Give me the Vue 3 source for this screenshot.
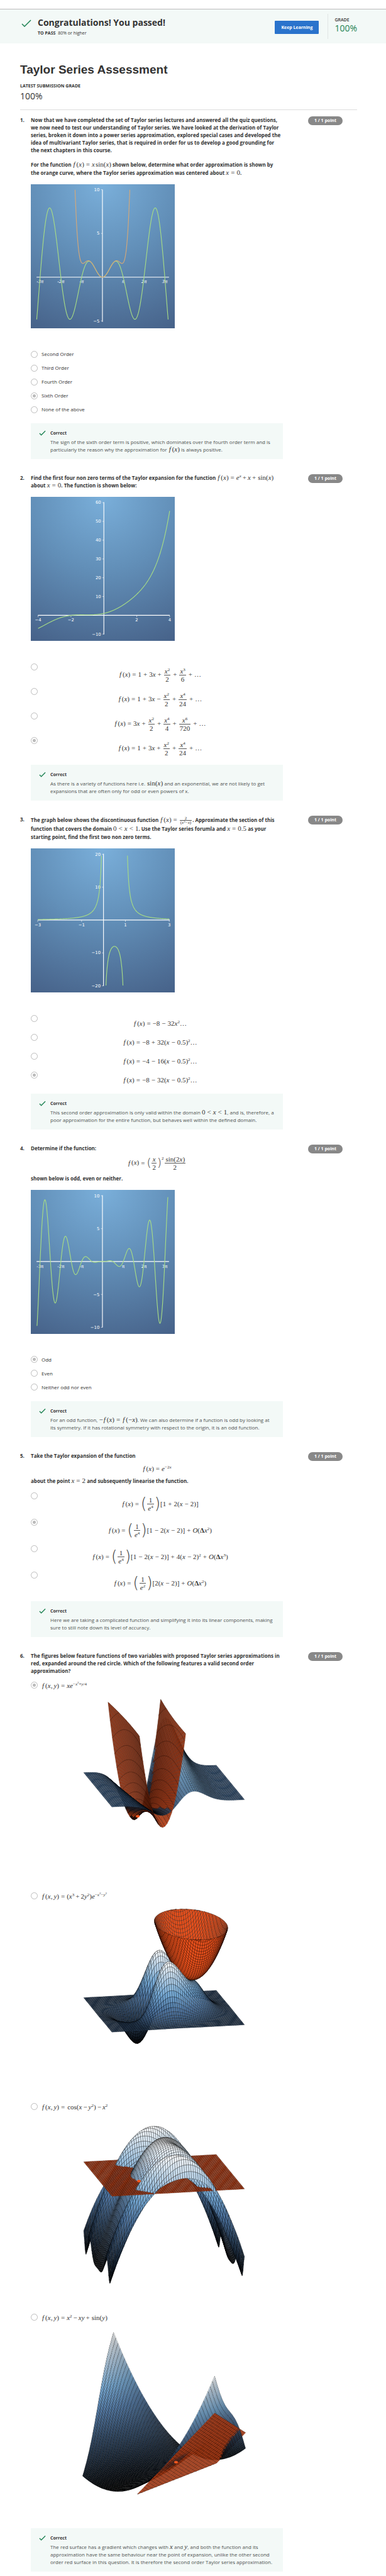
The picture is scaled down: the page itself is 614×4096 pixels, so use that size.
<script setup>
import { h } from 'vue'

/* ---------- formulas ---------- */

function readGroup(src, at) {
  if (src[at] !== '{') return [src[at], at + 1]
  let depth = 1
  let end = at + 1
  while (depth > 0) {
    if (src[end] === '{') depth++
    if (src[end] === '}') depth--
    end++
  }
  return [src.slice(at + 1, end - 1), end]
}

function formula(src, tight = false) {
  const out = []
  let canBeBinary = false
  let i = 0
  while (i < src.length) {
    const c = src[i]
    if (c === ' ') {
      i++
    } else if (src.startsWith('\\frac', i)) {
      const [top, a] = readGroup(src, i + 5)
      const [bottom, b] = readGroup(src, a)
      out.push(h('span', { class: 'm-frac' }, [
        h('span', { class: 'm-num' }, formula(top, true)),
        h('span', { class: 'm-den' }, formula(bottom, true)),
      ]))
      canBeBinary = true
      i = b
    } else if (src.startsWith('\\big', i)) {
      out.push(h('span', { class: 'm-big' }, src[i + 4]))
      i += 5
    } else if (src.startsWith('\\mid', i)) {
      out.push(h('span', { class: 'm-mid' }, src[i + 4]))
      i += 5
    } else if (src.startsWith('\\sin', i) || src.startsWith('\\cos', i)) {
      out.push(h('span', { class: 'm-fn' }, src.slice(i + 1, i + 4)))
      canBeBinary = true
      i += 4
    } else if (c === '^') {
      const [body, a] = readGroup(src, i + 1)
      out.push(h('span', { class: 'm-sup' }, formula(body, true)))
      i = a
    } else if (c === '=' || c === '<') {
      out.push(h('span', { class: 'm-rel' }, c))
      canBeBinary = false
      i++
    } else if (c === '+' || c === '-') {
      const sign = c === '-' ? '−' : '+'
      out.push(h('span', { class: canBeBinary && !tight ? 'm-bin' : 'm-op' }, sign))
      canBeBinary = false
      i++
    } else if (c === 'f') {
      out.push(h('i', { class: 'm-f' }, c))
      i++
    } else if (/[a-zA-Z]/.test(c)) {
      out.push(h('i', null, c))
      canBeBinary = true
      i++
    } else if (c === 'Δ') {
      out.push(h('b', null, c))
      i++
    } else {
      out.push(c)
      canBeBinary = c !== '(' && c !== '['
      if (c === ',') out.push(h('span', { class: 'm-gap' }))
      i++
    }
  }
  return out
}

const Tex = (props) => h('span', { class: 'math' }, formula(props.src))
Tex.props = ['src']

const Rich = (props) =>
  props.text.split('$').map((part, i) =>
    i % 2 ? h('span', { class: 'math' }, formula(part)) : part)
Rich.props = ['text']

/* ---------- line plots ---------- */

const green = '#a6db86'
const orange = '#d5a878'

function trace(plot, fn) {
  let d = ''
  let pen = false
  const steps = 900
  for (let i = 0; i <= steps; i++) {
    const x = plot.from + ((plot.to - plot.from) * i) / steps
    const y = fn(x)
    if (y > plot.max || y < plot.min || !Number.isFinite(y)) {
      pen = false
      continue
    }
    d += (pen ? 'L' : 'M') + (plot.ox + x * plot.sx).toFixed(1) + ' ' + (plot.oy - y * plot.sy).toFixed(1)
    pen = true
  }
  return d
}

const PI = Math.PI
const piTicks = [[-3, '-3π'], [-2, '-2π'], [-1, '-π'], [1, 'π'], [2, '2π'], [3, '3π']].map(([k, t]) => [k * PI, t])
const num = (...vals) => vals.map((v) => [v, String(v).replace('-', '−')])

function makePlot(p) {
  return { ...p, paths: p.curves.map(([fn, color]) => ({ d: trace(p, fn), color })) }
}

const plotSine = makePlot({
  title: 'Graph of x sin(x) with an approximation', ox: 199, oy: 258, sx: 18.38, sy: 24.3, from: -10, to: 10, min: -5, max: 10,
  left: 16, right: 384, xt: piTicks, yt: num(10, 5, -5), italic: true,
  curves: [[(x) => x * Math.sin(x), green], [(x) => x ** 2 - x ** 4 / 6 + x ** 6 / 120, orange]],
})
const plotExp = makePlot({
  title: 'Graph of the function', ox: 203, oy: 329, sx: 45.7, sy: 5.216, from: -4, to: 4, min: -10, max: 60,
  left: 20, right: 386, xt: num(-4, -2, 2, 4), yt: num(60, 50, 40, 30, 20, 10, -10), ticks: true,
  curves: [[(x) => Math.exp(x) + x + x * Math.sin(x), green]],
})
const plotRational = makePlot({
  title: 'Graph of the discontinuous function', ox: 202, oy: 199, sx: 60.9, sy: 9.13, from: -3, to: 3, min: -20, max: 20,
  left: 20, right: 386, xt: num(-3, -1, 1, 3), yt: num(20, 10, -10, -20), ticks: true,
  curves: [[(x) => 2 / (x * x - x), green]],
})
const plotOdd = makePlot({
  title: 'Graph of the product function', ox: 199, oy: 199, sx: 18.38, sy: 18.27, from: -10, to: 10, min: -10, max: 10,
  left: 16, right: 384, xt: piTicks, yt: num(10, 5, -5, -10),
  curves: [[(x) => (x / 2) ** 2 * Math.sin(2 * x) / 2, green]],
})

/* ---------- surface plots ---------- */

const ramp = [[0, [0, 0, 0]], [0.33, [48, 72, 100]], [0.5, [80, 119, 163]], [0.66, [119, 172, 216]], [1, [255, 255, 255]]]

function shade(t) {
  const v = Math.min(1, Math.max(0, t))
  let k = 1
  while (ramp[k][0] < v) k++
  const [a, ca] = ramp[k - 1]
  const [b, cb] = ramp[k]
  const u = (v - a) / (b - a)
  return 'rgb(' + ca.map((c, i) => Math.round(c + (cb[i] - c) * u)).join() + ')'
}

const clamp = (v, lo, hi) => Math.min(hi, Math.max(lo, v))

function surface(view, { fn, lo = () => -3, hi = () => 3, y0 = -3, y1 = 3, color }) {
  const n = 60
  const quads = []
  const point = (i, j) => {
    const y = clamp(-3 + (6 * j) / n, y0, y1)
    const x = clamp(-3 + (6 * i) / n, lo(y), hi(y))
    const z = fn(x, y)
    const lift = (z - view.base) * view.z
    return {
      z,
      sx: view.cx + view.ex[0] * x + view.ey[0] * y,
      sy: view.cy + view.ex[1] * x + view.ey[1] * y - lift,
      depth: 33.9 * (view.near[0] * x + view.near[1] * y) + 0.269 * lift,
    }
  }
  const rows = []
  for (let j = 0; j <= n; j++) {
    const row = []
    for (let i = 0; i <= n; i++) row.push(point(i, j))
    rows.push(row)
  }
  for (let j = 0; j < n; j++) {
    for (let i = 0; i < n; i++) {
      const q = [rows[j][i], rows[j][i + 1], rows[j + 1][i + 1], rows[j + 1][i]]
      const wide = Math.abs(q[1].sx - q[0].sx) + Math.abs(q[2].sx - q[3].sx)
      if (wide < 0.01 || (q[0].sy === q[3].sy && q[0].sx === q[3].sx)) continue
      const z = (q[0].z + q[1].z + q[2].z + q[3].z) / 4
      quads.push({
        depth: (q[0].depth + q[1].depth + q[2].depth + q[3].depth) / 4,
        points: q.map((p) => p.sx.toFixed(1) + ',' + p.sy.toFixed(1)).join(' '),
        fill: color || shade((z - view.zmin) / (view.zmax - view.zmin)),
      })
    }
  }
  return quads
}

function figure(view, parts) {
  const quads = parts.flatMap((p) => surface(view, p)).sort((a, b) => a.depth - b.depth)
  return { quads, dot: view.dot, title: view.title }
}

const red = '#e8501c'
const left = { cx: 195, ex: [35.15, -1.93], ey: [-7.5, -9.13], near: [-0.209, -0.978], base: 0 }
const right = { cx: 195, ex: [35, 2.13], ey: [8.19, -9], near: [0.228, -0.974], base: 0 }

const E = Math.exp(0.575)
const trough = (y) => -0.4289 * E * (1 + (y - 2.3) / 4 + (y - 2.3) ** 2 / 32)
const span = (y) => Math.sqrt((1.25 - trough(y)) / (0.858 * E))
const bowl = (x, y) => 0.41 + 0.298 * (x - 1.22) ** 2 + 0.102 * y * y
const bowlSpan = (y) => Math.sqrt(Math.max(0, (0.725 - 0.102 * y * y) / 0.298))

const figures = [
  figure({ ...left, cy: 149, z: 87.9, zmin: -0.91, zmax: 0.91, dot: [153, 197], title: 'Surface with red troughs' }, [
    { fn: (x, y) => x * Math.exp(-x * x + y / 4) },
    { fn: (x, y) => trough(y) + 0.858 * E * (x + 0.707) ** 2, lo: (y) => -0.707 - span(y), hi: (y) => -0.707 + span(y), color: red },
  ]),
  figure({ ...left, cy: 172, z: 119.6, zmin: -0.41, zmax: 0.74, title: 'Surface with red bowl' }, [
    { fn: (x, y) => (x ** 3 + 2 * y * y) * Math.exp(-x * x - y * y) },
    { fn: bowl, lo: (y) => 1.22 - bowlSpan(y), hi: (y) => 1.22 + bowlSpan(y), y0: -2.66, y1: 2.66, color: red },
  ]),
  figure({ ...left, cy: 98, z: 18, base: -2.06, zmin: -10, zmax: 1, dot: [155, 107], title: 'Arched surface with red plane' }, [
    { fn: (x, y) => Math.cos(x - y * y) - x * x },
    { fn: () => -2.06, color: red },
  ]),
  figure({ ...right, cy: 219, z: 9.53, zmin: -2.4, zmax: 18, dot: [214, 219], title: 'Saddle surface with red plane' }, [
    { fn: (x, y) => x * x - x * y + Math.sin(y) },
    { fn: (x, y) => 2.05 + 4.08 * (x - 1) - 1.49 * (y + 2), lo: (y) => 1 + (-4.68 + 1.49 * (y + 2)) / 4.08, color: red },
  ]),
]

/* ---------- content ---------- */

const questions = [
  {
    intro: [
      { text: 'Now that we have completed the set of Taylor series lectures and answered all the quiz questions,\nwe now need to test our understanding of Taylor series. We have looked at the derivation of Taylor\nseries, broken it down into a power series approximation, explored special cases and developed the\nidea of multivariant Taylor series, that is required in order for us to develop a good grounding for\nthe next chapters in this course.' },
      { text: 'For the function $f(x) = x\\sin(x)$ shown below, determine what order approximation is shown by\nthe orange curve, where the Taylor series approximation was centered about $x = 0$.', kind: 'second' },
    ],
    plot: plotSine,
    options: ['Second Order', 'Third Order', 'Fourth Order', 'Sixth Order', 'None of the above'],
    picked: 3,
    feedback: 'The sign of the sixth order term is positive, which dominates over the fourth order term and is\nparticularly the reason why the approximation for $f(x)$ is always positive.',
  },
  {
    intro: [{ text: 'Find the first four non zero terms of the Taylor expansion for the function $f(x) = e^x + x + \\sin(x)$\nabout $x = 0$. The function is shown below:' }],
    plot: plotExp,
    kind: 'tall',
    equations: [
      'f(x) = 1 + 3x + \\frac{x^2}{2} + \\frac{x^3}{6} + …',
      'f(x) = 1 + 3x - \\frac{x^2}{2} + \\frac{x^4}{24} + …',
      'f(x) = 3x + \\frac{x^2}{2} + \\frac{x^4}{4} + \\frac{x^6}{720} + …',
      'f(x) = 1 + 3x + \\frac{x^2}{2} + \\frac{x^4}{24} + …',
    ],
    picked: 3,
    feedback: 'As there is a variety of functions here i.e. $\\sin(x)$ and an exponential, we are not likely to get\nexpansions that are often only for odd or even powers of x.',
  },
  {
    intro: [{ text: 'The graph below shows the discontinuous function $f(x) = \\frac{2}{(x^2-x)}$. Approximate the section of this\nfunction that covers the domain $0 < x < 1$. Use the Taylor series forumla and $x = 0.5$ as your\nstarting point, find the first two non zero terms.', kind: 'small-fraction' }],
    plot: plotRational,
    kind: 'plain',
    equations: [
      'f(x) = -8 - 32x^2…',
      'f(x) = -8 + 32(x - 0.5)^2…',
      'f(x) = -4 - 16(x - 0.5)^2…',
      'f(x) = -8 - 32(x - 0.5)^2…',
    ],
    picked: 3,
    feedback: 'This second order approximation is only valid within the domain $0 < x < 1$, and is, therefore, a\npoor approximation for the entire function, but behaves well within the defined domain.',
  },
  {
    intro: [
      { text: 'Determine if the function:' },
      { tex: 'f(x) = \\mid(\\frac{x}{2}\\mid)^{2}\\frac{\\sin(2x)}{2}', kind: 'fraction' },
      { text: 'shown below is odd, even or neither.' },
    ],
    plot: plotOdd,
    options: ['Odd', 'Even', 'Neither odd nor even'],
    picked: 0,
    feedback: 'For an odd function, $-f(x) = f(-x)$. We can also determine if a function is odd by looking at\nits symmetry. If it has rotational symmetry with respect to the origin, it is an odd function.',
  },
  {
    intro: [
      { text: 'Take the Taylor expansion of the function' },
      { tex: 'f(x) = e^{-2x}', kind: 'line' },
      { text: 'about the point $x = 2$ and subsequently linearise the function.' },
    ],
    kind: 'taller',
    equations: [
      'f(x) = \\big(\\frac{1}{e^4}\\big)[1 + 2(x - 2)]',
      'f(x) = \\big(\\frac{1}{e^4}\\big)[1 - 2(x - 2)] + O(Δx^2)',
      'f(x) = \\big(\\frac{1}{e^4}\\big)[1 - 2(x - 2)] + 4(x - 2)^2 + O(Δx^3)',
      'f(x) = \\big(\\frac{1}{e^2}\\big)[2(x - 2)] + O(Δx^2)',
    ],
    picked: 1,
    feedback: 'Here we are taking a complicated function and simplifying it into its linear components, making\nsure to still note down its level of accuracy.',
  },
  {
    intro: [{ text: 'The figures below feature functions of two variables with proposed Taylor series approximations in\nred, expanded around the red circle. Which of the following features a valid second order\napproximation?' }],
    figures: [
      'f(x,y) = xe^{-x^2+y/4}',
      'f(x,y) = (x^3 + 2y^2)e^{-x^2-y^2}',
      'f(x,y) = \\cos(x - y^2) - x^2',
      'f(x,y) = x^2 - xy + \\sin(y)',
    ],
    picked: 0,
    feedback: 'The red surface has a gradient which changes with $x$ and $y$, and both the function and its\napproximation have the same behaviour near the point of expansion, unlike the other second\norder red surface in this question. It is therefore the second order Taylor series approximation.',
  },
]
</script>

<template>
  <div class="page">
    <header class="banner">
      <svg class="banner-check" viewBox="0 0 16 12" aria-hidden="true"><path d="M1 7 L5 11 L15 1" /></svg>
      <div class="banner-text">
        <h2>Congratulations! You passed!</h2>
        <p><b>TO PASS</b> 80% or higher</p>
      </div>
      <button type="button" class="keep">Keep Learning</button>
      <div class="grade">
        <span>GRADE</span>
        <strong>100%</strong>
      </div>
    </header>

    <main>
      <div class="summary">
        <h1>Taylor Series Assessment</h1>
        <p class="caption">LATEST SUBMISSION GRADE</p>
        <p class="score">100%</p>
      </div>

      <section v-for="(q, qi) in questions" :key="qi" class="question">
        <span class="number">{{ qi + 1 }}.</span>
        <div class="body">
          <template v-for="(part, pi) in q.intro" :key="pi">
            <div v-if="part.tex" class="display" :class="part.kind"><Tex :src="part.tex" /></div>
            <p v-else class="prompt" :class="part.kind"><Rich :text="part.text" /></p>
          </template>

          <svg v-if="q.plot" class="plot" viewBox="0 0 400 400" role="img" :aria-label="q.plot.title">
            <defs>
              <radialGradient :id="'sky' + qi" gradientUnits="userSpaceOnUse" cx="200" cy="0" r="450">
                <stop offset="0" stop-color="#7aafda" />
                <stop offset="0.45" stop-color="#628fb8" />
                <stop offset="1" stop-color="#466188" />
              </radialGradient>
            </defs>
            <rect width="400" height="400" :fill="'url(#sky' + qi + ')'" />
            <g class="labels y">
              <text v-for="t in q.plot.yt" :key="t[1]" :x="q.plot.ox - 8" :y="q.plot.oy - t[0] * q.plot.sy + 4">{{ t[1] }}</text>
            </g>
            <g class="labels x" :class="{ italic: q.plot.italic }">
              <text v-for="t in q.plot.xt" :key="t[1]" :x="q.plot.ox + t[0] * q.plot.sx" :y="q.plot.oy + 17">{{ t[1] }}</text>
            </g>
            <g class="axes">
              <line :x1="q.plot.left" :x2="q.plot.right" :y1="q.plot.oy" :y2="q.plot.oy" />
              <line :x1="q.plot.ox" :x2="q.plot.ox" y1="15" y2="382" />
              <line v-for="t in q.plot.yt" :key="'y' + t[1]" class="tick" :x1="q.plot.ox - 4" :x2="q.plot.ox" :y1="q.plot.oy - t[0] * q.plot.sy" :y2="q.plot.oy - t[0] * q.plot.sy" />
              <template v-if="q.plot.ticks">
                <line v-for="t in q.plot.xt" :key="'x' + t[1]" class="tick" :x1="q.plot.ox + t[0] * q.plot.sx" :x2="q.plot.ox + t[0] * q.plot.sx" :y1="q.plot.oy" :y2="q.plot.oy + 5" />
              </template>
            </g>
            <path v-for="(c, ci) in q.plot.paths" :key="ci" class="curve" :d="c.d" :stroke="c.color" />
          </svg>

          <div v-if="q.options" class="options" role="radiogroup">
            <label v-for="(o, oi) in q.options" :key="oi" class="option">
              <input type="radio" :name="'q' + qi" :checked="oi === q.picked" />
              <span>{{ o }}</span>
            </label>
          </div>

          <div v-if="q.equations" class="equations" :class="q.kind" role="radiogroup">
            <label v-for="(e, ei) in q.equations" :key="ei" class="equation">
              <input type="radio" :name="'q' + qi" :checked="ei === q.picked" />
              <span class="centered"><Tex :src="e" /></span>
            </label>
          </div>

          <div v-if="q.figures" class="figures" role="radiogroup">
            <div v-for="(f, fi) in q.figures" :key="fi" class="figure">
              <label class="option">
                <input type="radio" :name="'q' + qi" :checked="fi === q.picked" />
                <Tex :src="f" />
              </label>
              <svg class="surface" viewBox="0 0 378 302" role="img" :aria-label="figures[fi].title">
                <polygon v-for="(p, k) in figures[fi].quads" :key="k" :points="p.points" :fill="p.fill" />
                <ellipse v-if="figures[fi].dot" :cx="figures[fi].dot[0]" :cy="figures[fi].dot[1]" rx="3" ry="2" />
              </svg>
            </div>
          </div>

          <aside class="feedback">
            <svg class="check" viewBox="0 0 12 9" aria-hidden="true"><path d="M1 5 L4 8 L11 1" /></svg>
            <div>
              <h3>Correct</h3>
              <p><Rich :text="q.feedback" /></p>
            </div>
          </aside>
        </div>
        <span class="points">1 / 1 point</span>
      </section>
    </main>
  </div>
</template>

<style>
body {
  background: #fff;
}
</style>

<style scoped>
.page {
  padding-top: 14px;
  padding-bottom: 9px;
  font-family: "Open Sans", "Noto Sans", sans-serif;
  font-size: 8px;
  line-height: 12px;
  color: #333;
}
h1, h2, h3, p {
  margin: 0;
}

/* banner */
.banner {
  display: flex;
  align-items: flex-start;
  height: 54px;
  border-top: 1px solid #bbb;
  background: #f3f9f7;
  padding: 0 46px 0 34px;
}
.banner-check {
  width: 16px;
  height: 12px;
  margin: 16px 10px 0 0;
}
.banner-check path,
.check path {
  fill: none;
  stroke: #1f8354;
  stroke-width: 1.5;
}
.banner-text {
  flex: 1;
  padding-top: 11px;
}
.banner-text h2 {
  font-size: 14px;
  line-height: 20px;
  font-weight: 700;
}
.banner-text p {
  margin-top: 2px;
  font-size: 7px;
  line-height: 10px;
}
.banner-text b {
  font-weight: 700;
  margin-right: 2px;
}
.keep {
  width: 70px;
  height: 21px;
  margin-top: 18px;
  padding: 0;
  border: 0;
  border-radius: 1px;
  background: #2a73cc;
  color: #fff;
  font: 700 7px/20px "Open Sans", sans-serif;
}
.grade {
  height: 40px;
  margin: 7px 0 0 14px;
  padding-left: 10px;
  border-left: 1px solid #e1e6e5;
  display: flex;
  flex-direction: column;
}
.grade span {
  margin-top: 5px;
  font-size: 7px;
  line-height: 10px;
  font-weight: 600;
}
.grade strong {
  font-size: 14px;
  line-height: 16px;
  font-weight: 400;
  color: #1f8354;
}

/* heading */
main {
  padding: 0 46px 0 32px;
}
.summary {
  padding: 30px 0 12px;
  border-bottom: 1px solid #ddd;
  margin-bottom: 10px;
}
h1 {
  font: 700 19px/24px "Liberation Sans", Arial, sans-serif;
}
.caption {
  margin-top: 9px;
  font-size: 7px;
  line-height: 10px;
  font-weight: 700;
}
.score {
  margin-top: 2px;
  font-size: 14px;
  line-height: 18px;
}

/* questions */
.question {
  display: grid;
  grid-template-columns: 17px minmax(0, 401px) 1fr;
  align-items: start;
}
.question + .question {
  margin-top: 24px;
}
.number,
.prompt {
  font-weight: 700;
}
.prompt {
  margin-right: -12px;
  white-space: pre-line;
}
.prompt.second {
  margin-top: 10px;
  line-height: 13px;
}
.prompt.small-fraction {
  line-height: 13px;
}
.points {
  width: 55px;
  height: 14px;
  margin-left: 40px;
  border-radius: 7px;
  background: #888;
  color: #fff;
  font-size: 7px;
  font-weight: 700;
  line-height: 14px;
  text-align: center;
}
.display {
  display: flex;
  align-items: center;
  justify-content: center;
}
.display.fraction {
  height: 36px;
}
.display.line {
  height: 28px;
}

/* line plots */
.plot {
  display: block;
  width: 229px;
  height: 229px;
  margin: 12px 0 30px;
}
.labels text {
  font: 12px "DejaVu Sans", sans-serif;
  fill: #fff;
}
.labels.y text {
  text-anchor: end;
}
.labels.x text {
  text-anchor: middle;
}
.labels.italic text {
  font-style: italic;
}
.axes line {
  stroke: #fff;
  stroke-width: 2;
}
.axes .tick {
  stroke-width: 1;
}
.curve {
  fill: none;
  stroke-width: 2;
}

/* answers */
input[type="radio"] {
  appearance: none;
  flex: none;
  box-sizing: border-box;
  width: 11px;
  height: 11px;
  margin: 0;
  border: 1px solid #bbb;
  border-radius: 50%;
  background: #fff;
}
input[type="radio"]:checked {
  background: radial-gradient(circle, #bbb 0, #bbb 2px, #fff 3px);
}
.option {
  display: flex;
  align-items: center;
  gap: 6px;
  height: 22px;
}
.equations .equation {
  display: flex;
  box-sizing: border-box;
  align-items: flex-start;
  padding-top: 6px;
}
.equations.tall .equation {
  height: 39px;
}
.equations.plain .equation {
  height: 30px;
}
.equations.taller .equation {
  height: 42px;
}
.equations.taller,
.figures {
  margin-top: 6px;
}
.centered {
  flex: 1;
  display: flex;
  justify-content: center;
  align-items: center;
  height: 37px;
  margin-right: 1px;
}
.plain .centered {
  height: 26px;
}
.taller .centered {
  height: 38px;
}
.figure {
  padding-bottom: 11px;
}
.surface {
  display: block;
  width: 378px;
  height: 302px;
  margin-left: 17px;
}
.surface polygon {
  stroke: #000;
  stroke-width: 0.3;
  stroke-linejoin: round;
}
.surface ellipse {
  fill: #f0561f;
}

/* feedback */
.feedback {
  display: flex;
  margin-top: 11px;
  padding: 10px 4px 9px 13px;
  background: #f3f9f7;
}
.check {
  flex: none;
  width: 11px;
  height: 9px;
  margin: 1px 7px 0 0;
}
.feedback h3 {
  font-size: 7px;
  line-height: 12px;
  font-weight: 700;
  margin-bottom: 2px;
}
.feedback p {
  color: #505352;
  white-space: pre-line;
}

/* formulas */
.page :deep(.math) {
  font: 400 11px/10px "Liberation Serif", "Times New Roman", serif;
  white-space: nowrap;
  color: #333;
}
.page :deep(.m-f) {
  margin: 0 2px 0 1px;
}
.page :deep(.m-rel) {
  margin: 0 3px;
}
.page :deep(.m-bin) {
  margin: 0 2px;
}
.centered :deep(.m-bin) {
  margin: 0 3px;
}
.page :deep(.m-fn) {
  margin-left: 1px;
}
.page :deep(.m-gap) {
  margin-left: 2px;
}
.page :deep(.m-sup) {
  font-size: 7px;
  line-height: 0;
  vertical-align: 4px;
}
.page :deep(.m-sup .m-sup) {
  font-size: 5px;
  vertical-align: 3px;
}
.page :deep(.m-frac) {
  display: inline-flex;
  flex-direction: column;
  vertical-align: middle;
  text-align: center;
  margin: 0 1px;
}
.page :deep(.m-num) {
  padding: 0 1px 1px;
  border-bottom: 1px solid #555;
}
.page :deep(.m-den) {
  padding: 1px 1px 0;
}
.page :deep(.m-big),
.page :deep(.m-mid) {
  display: inline-block;
  vertical-align: middle;
  font: 200 24px/24px "DejaVu Sans", sans-serif;
  padding-bottom: 2px;
}
.page :deep(.m-mid) {
  font-size: 18px;
  line-height: 18px;
}
.display.fraction :deep(.m-mid + .m-sup) {
  vertical-align: 8px;
}
.small-fraction :deep(.m-frac) {
  font-size: 7px;
  line-height: 6px;
}
.small-fraction :deep(.m-frac .m-num) {
  padding-bottom: 0;
}
.small-fraction :deep(.m-frac .m-den) {
  padding-top: 0;
}
.small-fraction :deep(.m-frac .m-sup) {
  font-size: 5px;
  vertical-align: 2px;
}
</style>
